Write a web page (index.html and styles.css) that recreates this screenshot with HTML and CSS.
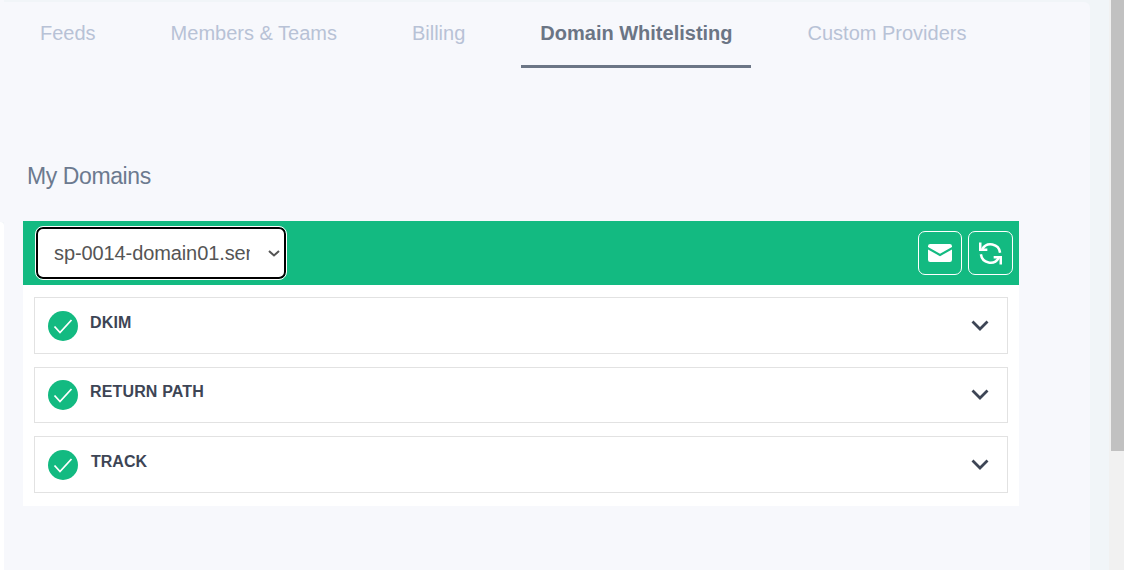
FILE: index.html
```html
<!DOCTYPE html>
<html lang="en">
<head>
<meta charset="utf-8">
<title>Domain Whitelisting</title>
<link rel="stylesheet" href="styles.css">
</head>
<body>
<div class="page">
  <div class="gutter">
    <div class="gutter-top"></div>
    <div class="gutter-panel"></div>
  </div>
  <main class="card">
    <nav class="tabs">
      <a class="tab">Feeds</a>
      <a class="tab">Members &amp; Teams</a>
      <a class="tab">Billing</a>
      <a class="tab active">Domain Whitelisting</a>
      <a class="tab">Custom Providers</a>
    </nav>
    <h2 class="title">My Domains</h2>
    <section class="panel">
      <header class="bar">
        <select class="domain">
          <option>sp-0014-domain01.sendpost.example</option>
        </select>
        <div class="actions">
          <button class="icon-btn mail" aria-label="Email">
            <svg width="24" height="18" viewBox="0 0 24 18"><path fill="#fff" d="M2.2 0h19.6A2.2 2.2 0 0 1 24 2.2v.9l-12 6.6L0 3.1v-.9A2.2 2.2 0 0 1 2.2 0zM0 5.6l12 6.6 12-6.6v10.2a2.2 2.2 0 0 1-2.2 2.2H2.2A2.2 2.2 0 0 1 0 15.800z"/></svg>
          </button>
          <button class="icon-btn sync" aria-label="Refresh">
            <svg width="23" height="23" viewBox="0 0 24 24" fill="none" stroke="#fff" stroke-width="2.600"><path d="M3.400 7.500A10 10 0 0 1 22 11.200"/><path d="M20.600 16.500A10 10 0 0 1 2 12.800"/><path d="M1.300 .5V8.200H8.700"/><path d="M22.700 23.500V15.800H15.300"/></svg>
          </button>
        </div>
      </header>
      <div class="rows">
        <div class="row">
          <svg class="check" width="30" height="30" viewBox="0 0 30 30"><circle cx="15" cy="15" r="15" fill="#13ba81"/><path d="M6.500 15.500l5.500 6L23.500 9" fill="none" stroke="#fff" stroke-width="1.800"/></svg>
          <span class="label">DKIM</span>
          <svg class="chev" width="18" height="11" viewBox="0 0 18 11"><path d="M1.500 1.500L9 9l7.500-7.500" fill="none" stroke="#3d4555" stroke-width="2.800"/></svg>
        </div>
        <div class="row">
          <svg class="check" width="30" height="30" viewBox="0 0 30 30"><circle cx="15" cy="15" r="15" fill="#13ba81"/><path d="M6.500 15.500l5.500 6L23.500 9" fill="none" stroke="#fff" stroke-width="1.800"/></svg>
          <span class="label">RETURN PATH</span>
          <svg class="chev" width="18" height="11" viewBox="0 0 18 11"><path d="M1.500 1.500L9 9l7.500-7.500" fill="none" stroke="#3d4555" stroke-width="2.800"/></svg>
        </div>
        <div class="row">
          <svg class="check" width="30" height="30" viewBox="0 0 30 30"><circle cx="15" cy="15" r="15" fill="#13ba81"/><path d="M6.500 15.500l5.500 6L23.500 9" fill="none" stroke="#fff" stroke-width="1.800"/></svg>
          <span class="label track">TRACK</span>
          <svg class="chev" width="18" height="11" viewBox="0 0 18 11"><path d="M1.500 1.500L9 9l7.500-7.500" fill="none" stroke="#3d4555" stroke-width="2.800"/></svg>
        </div>
      </div>
    </section>
  </main>
  <div class="side"></div>
  <div class="scrollbar"><div class="thumb"></div></div>
</div>
</body>
</html>
```
FILE: styles.css
```css
* { box-sizing: border-box; }
html, body { margin: 0; height: 100%; overflow: hidden; }
body { font-family: "Liberation Sans", Arial, sans-serif; background: #f1f5f8; }
.page { display: flex; width: 1124px; height: 570px; }
.gutter { width: 4px; display: flex; flex-direction: column; flex: none; }
.gutter-top { height: 222px; background: #f7f8fc; }
.gutter-panel { flex: 1; background: #fff; border-top-right-radius: 4px; }
.card { width: 1086px; flex: none; margin-top: 2px; background: #f7f8fc; border-top-right-radius: 6px; }
.side { width: 19px; flex: none; background: #f1f5f8; }
.scrollbar { width: 15px; flex: none; background: #f1f1f1; padding-left: 2px; }
.thumb { height: 451px; background: #c1c1c1; }
.tabs { display: flex; gap: 35px; padding: 0 0 0 16px; height: 66px; }
.tab { padding: 19px 20px 0; font-size: 20px; line-height: 24px; color: #b8c2d6; border-bottom: 3px solid transparent; white-space: nowrap; }
.tab.active { margin: 0 2px 0 1px; padding: 19px 18px 0 19px; font-weight: 700; color: #6b7585; border-bottom-color: #6c7686; }
.title { margin: 93px 0 0 23px; font-size: 23px; letter-spacing: -.4px; line-height: 30px; font-weight: 400; color: #6c7a8f; }
.panel { width: 996px; margin: 30px 0 0 19px; background: #fff; padding-bottom: 13.2px; }
.bar { height: 64px; background: #13ba81; display: flex; align-items: center; justify-content: space-between; padding: 0 6px 0 13px; }
.domain { appearance: none; width: 250px; height: 52px; padding: 0 34px 0 16px; font: 20px "Liberation Sans", Arial, sans-serif; letter-spacing: -.1px; color: #555; background: #fff url("data:image/svg+xml,%3Csvg xmlns='http://www.w3.org/2000/svg' viewBox='0 0 12 7'%3E%3Cpath d='M1 1l5 4.500L11 1' fill='none' stroke='%23555' stroke-width='2'/%3E%3C/svg%3E") no-repeat 230px 21px / 12px 7px; border: 2px solid #000; border-radius: 7px; outline: 1px solid #fff; outline-offset: 0; }
.actions { display: flex; gap: 6px; }
.icon-btn { width: 44px; height: 44px; padding: 0; display: flex; align-items: center; justify-content: center; background: transparent; border: 1px solid #fff; border-radius: 7px; }
.icon-btn.sync { width: 45px; }
.rows { padding: 12px 11px 0; display: flex; flex-direction: column; gap: 13px; }
.row { height: 56.6px; display: flex; align-items: center; padding: 0 18px 0 13px; background: #fff; border: 1px solid #e2e2e2; }
.check { flex: none; margin-top: 1px; }
.label { margin: -5px 0 0 12px; font-size: 16px; letter-spacing: .15px; font-weight: 700; color: #3d4555; }
.label.track { margin-left: 13px; letter-spacing: 0; }
.chev { flex: none; margin-left: auto; }
```
